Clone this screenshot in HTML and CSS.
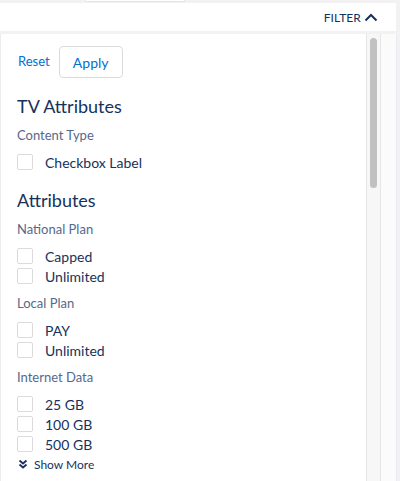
FILE: index.html
```html
<!DOCTYPE html>
<html>
<head>
<meta charset="utf-8">
<link rel="stylesheet" href="styles.css">
</head>
<body>
<div class="page">
  <div class="topstrip"><div class="tab-stub"></div></div>
  <div class="header">
    <span class="filter-title">FILTER</span>
    <svg class="chev-up" width="14" height="9" viewBox="0 0 14 9"><path d="M1.5 7.5 L7 2 L12.5 7.5" fill="none" stroke="#16325c" stroke-width="2"/></svg>
  </div>
  <div class="panel-wrap">
    <div class="panel">
      <div class="actions">
        <a class="reset">Reset</a>
        <button class="apply">Apply</button>
      </div>
      <h2 class="section">TV Attributes</h2>
      <div class="field-label">Content Type</div>
      <div class="group">
        <label class="cb"><span class="box"></span><span>Checkbox Label</span></label>
      </div>
      <h2 class="section">Attributes</h2>
      <div class="field-label">National Plan</div>
      <div class="group">
        <label class="cb"><span class="box"></span><span>Capped</span></label>
        <label class="cb"><span class="box"></span><span>Unlimited</span></label>
      </div>
      <div class="field-label">Local Plan</div>
      <div class="group">
        <label class="cb"><span class="box"></span><span>PAY</span></label>
        <label class="cb"><span class="box"></span><span>Unlimited</span></label>
      </div>
      <div class="field-label">Internet Data</div>
      <div class="group">
        <label class="cb"><span class="box"></span><span>25 GB</span></label>
        <label class="cb"><span class="box"></span><span>100 GB</span></label>
        <label class="cb"><span class="box"></span><span>500 GB</span></label>
      </div>
      <div class="show-more">
        <svg width="10" height="10" viewBox="0 0 10 10"><path d="M1.5 1.5 L5 4.5 L8.5 1.5 M1.5 5.5 L5 8.5 L8.5 5.5" fill="none" stroke="#16325c" stroke-width="1.8"/></svg>
        <span>Show More</span>
      </div>
    </div>
    <div class="track"><div class="thumb"></div></div>
    <div class="outer-strip"></div>
  </div>
</div>
</body>
</html>
```

FILE: styles.css
```css
html, body {
  margin: 0;
  padding: 0;
  background: #f3f2f2;
  height: 100%;
  overflow: hidden;
}
.page {
  width: 400px;
  height: 481px;
  display: flex;
  flex-direction: column;
  font-family: Lato, "Noto Sans", sans-serif;
  color: #16325c;
}
.topstrip {
  height: 3px;
  position: relative;
  background: #f3f2f2;
}
.tab-stub {
  position: absolute;
  left: 85px;
  top: 0;
  width: 98px;
  height: 1px;
  background: #fff;
  border: 1px solid #e4e4e8;
  border-top: none;
  border-radius: 0 0 3px 3px;
}
.header {
  width: 396px;
  height: 28px;
  background: #fff;
  display: flex;
  align-items: center;
  justify-content: flex-end;
  box-sizing: border-box;
}
.filter-title {
  font-size: 12px;
  letter-spacing: 0.1px;
  color: #16325c;
  margin-right: 3px;
  margin-top: 1px;
}
.chev-up {
  margin-right: 18px;
}
.panel-wrap {
  margin-top: 3px;
  flex: 1;
  display: flex;
  width: 397px;
  min-height: 0;
}
.panel {
  flex: 1;
  background: #fff;
  border-left: 1px solid #ececec;
  padding: 12px 0 0 16px;
  box-sizing: border-box;
  overflow: hidden;
}
.track {
  width: 15px;
  background: #f7f7f7;
  border-left: 1px solid #e6e6e6;
  border-right: 1px solid #e6e6e6;
  box-sizing: border-box;
  padding: 4px 0 0 3px;
}
.thumb {
  width: 7px;
  height: 150px;
  background: #c1c1c1;
  border-radius: 4px;
}
.outer-strip {
  width: 16px;
  background: #fbfbfb;
  border-right: 1px solid #e9ebf0;
  box-sizing: border-box;
}
.actions {
  display: flex;
  align-items: center;
  gap: 9px;
}
.reset {
  color: #0070d2;
  font-size: 13px;
  margin-left: 1px;
  margin-top: -2px;
}
.apply {
  width: 64px;
  height: 32px;
  background: #fff;
  border: 1px solid #dddbda;
  border-radius: 4px;
  color: #0070d2;
  font-family: Lato, "Noto Sans", sans-serif;
  font-size: 14px;
  padding: 0;
}
.section {
  margin: 16px 0 0 0;
  font-size: 18px;
  line-height: 24px;
  font-weight: normal;
  color: #16325c;
}
.field-label {
  margin-top: 8px;
  font-size: 13px;
  line-height: 18px;
  color: #54698d;
}
.group {
  margin-top: 8px;
  display: flex;
  flex-direction: column;
}
.cb {
  display: flex;
  align-items: center;
  height: 20px;
  font-size: 14px;
  color: #16325c;
}
.box {
  width: 16px;
  height: 16px;
  box-sizing: border-box;
  border: 1px solid #dddbda;
  border-radius: 2px;
  margin-right: 12px;
}
.show-more {
  display: flex;
  align-items: center;
  height: 20px;
  font-size: 12px;
  color: #16325c;
  gap: 6px;
  padding-left: 1px;
}
```
